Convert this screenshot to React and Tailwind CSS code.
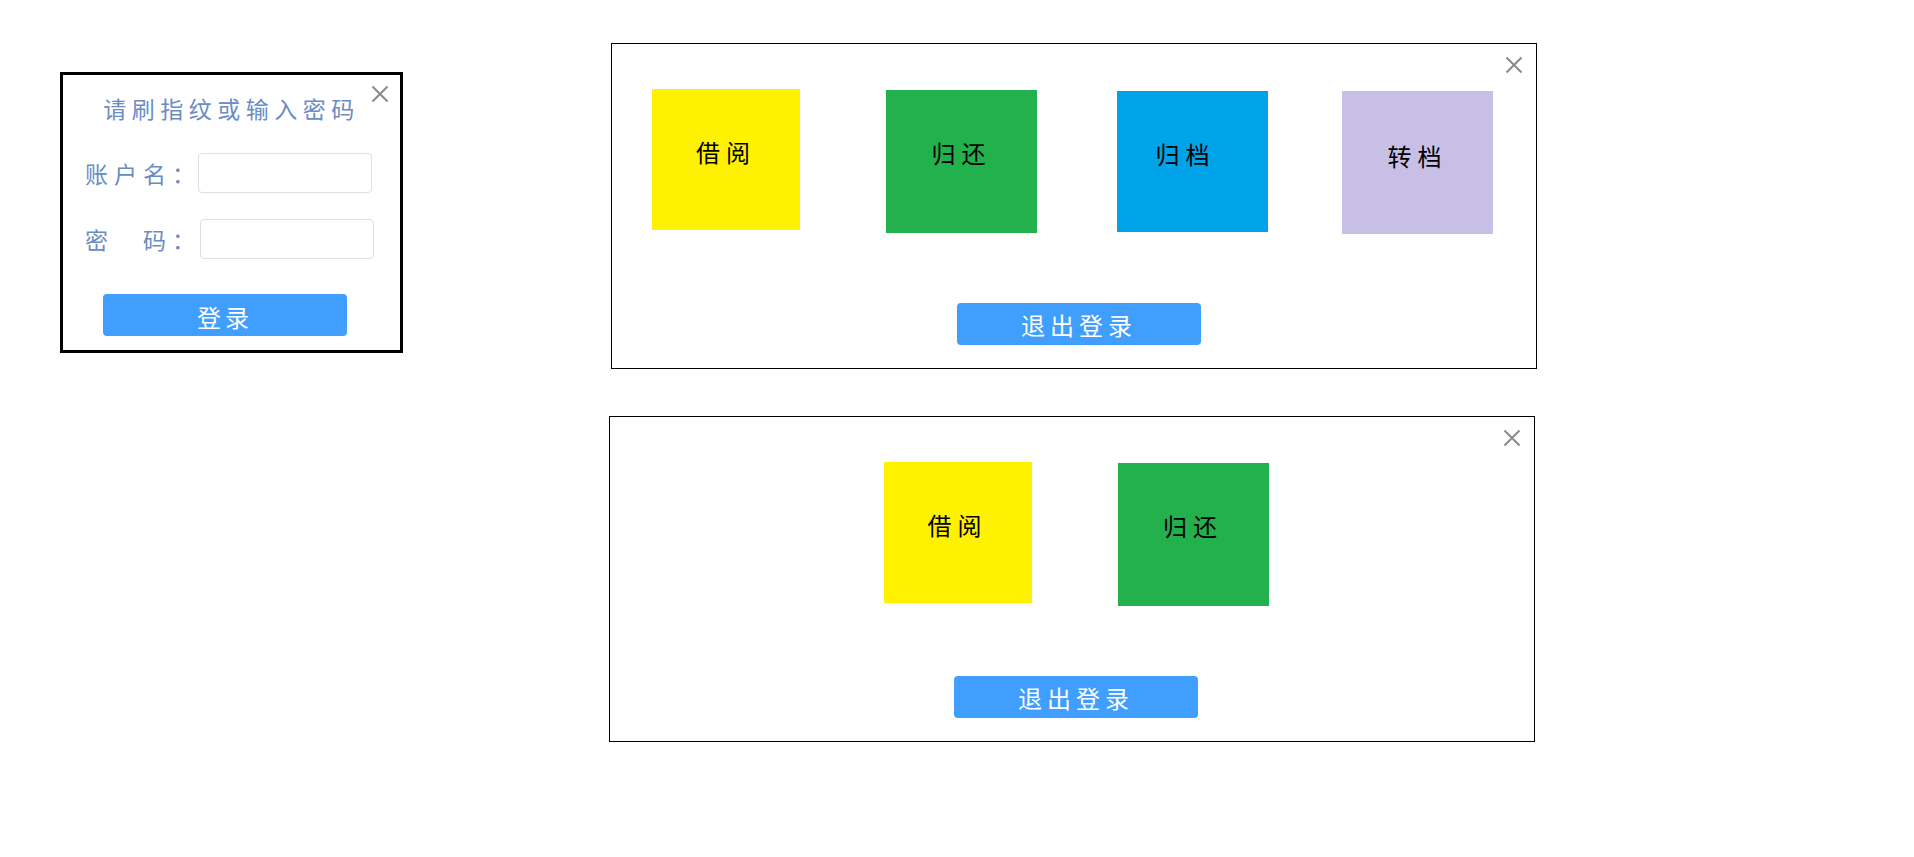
import React from 'react';

const FONT = { fontFamily: '"Noto Sans CJK SC", "Noto Sans", sans-serif' };

const CloseIcon = ({ className }) => (
  <svg className={className} width="18" height="18" viewBox="0 0 18 18" fill="none">
    <path d="M1.5 1.5 L16.5 16.5 M16.5 1.5 L1.5 16.5" stroke="#8a8a8a" strokeWidth="2" />
  </svg>
);

const LoginBox = () => (
  <div className="relative ml-[60px] mt-[72px] w-[343px] h-[281px] border-[3px] border-black bg-white flex flex-col">
    <CloseIcon className="absolute top-[10px] right-[11px]" />
    <div className="pt-[22px] text-center text-[23px] leading-none tracking-[5.5px] text-[#6a8cc4] whitespace-nowrap">
      请刷指纹或输入密码
    </div>
    <div className="mt-[33px] ml-[22px] flex items-center">
      <span className="w-[113px] shrink-0 whitespace-nowrap text-[23px] leading-none tracking-[6px] text-[#6a8cc4]">账户名：</span>
      <input type="text" className="w-[174px] shrink-0 h-[40px] border border-[#dcdfe6] rounded-[4px] outline-none px-2" />
    </div>
    <div className="mt-[26px] ml-[22px] flex items-center">
      <span className="w-[115px] shrink-0 whitespace-pre text-[23px] leading-none tracking-[6px] text-[#6a8cc4]">密　码：</span>
      <input type="password" className="w-[174px] shrink-0 h-[40px] border border-[#dcdfe6] rounded-[4px] outline-none px-2" />
    </div>
    <button className="mt-[35px] ml-[40px] w-[244px] h-[42px] rounded-[4px] bg-[#409eff] text-white text-[24px] leading-none tracking-[4px] pt-[3px]">
      登录
    </button>
  </div>
);

const Tile = ({ label, className, textClass = '' }) => (
  <div className={`shrink-0 flex justify-center pt-[51px] text-[24px] leading-none tracking-[6px] text-black ${className}`}>
    <span className={textClass}>{label}</span>
  </div>
);

const Panel = ({ children, rowClass, btnClass = '', className = '' }) => (
  <div className={`relative w-[926px] h-[326px] border border-black bg-white flex flex-col ${className}`}>
    <CloseIcon className="absolute top-[12px] right-[13px]" />
    <div className={`mt-[45px] flex items-start ${rowClass}`}>{children}</div>
    <button className={`mt-auto mb-[23px] self-center w-[244px] h-[42px] rounded-[4px] bg-[#409eff] text-white text-[24px] leading-none tracking-[5px] pt-[2px] ${btnClass}`}>
      退出登录
    </button>
  </div>
);

export default function App() {
  return (
    <div className="min-h-screen w-full bg-white flex items-start" style={FONT}>
      <LoginBox />
      <div className="ml-[208px] mt-[43px] flex flex-col gap-[47px]">
        <Panel rowClass="pl-[40px]" btnClass="ml-[10px]">
          <Tile label="借阅" className="w-[148px] h-[141px] bg-[#fff200]" />
          <Tile label="归还" className="ml-[86px] w-[151px] h-[143px] mt-[1px] bg-[#22b14c]" />
          <Tile label="归档" className="ml-[80px] w-[151px] h-[141px] mt-[2px] bg-[#00a2e8]" textClass="mr-[14px]" />
          <Tile label="转档" className="ml-[74px] w-[151px] h-[143px] mt-[2px] bg-[#c8bfe7] pt-[53px]" />
        </Panel>
        <Panel rowClass="justify-center gap-[86px] pl-[8px]" btnClass="ml-[8px]" className="-ml-[2px]">
          <Tile label="借阅" className="w-[148px] h-[141px] bg-[#fff200]" />
          <Tile label="归还" className="w-[151px] h-[143px] mt-[1px] bg-[#22b14c]" />
        </Panel>
      </div>
    </div>
  );
}
